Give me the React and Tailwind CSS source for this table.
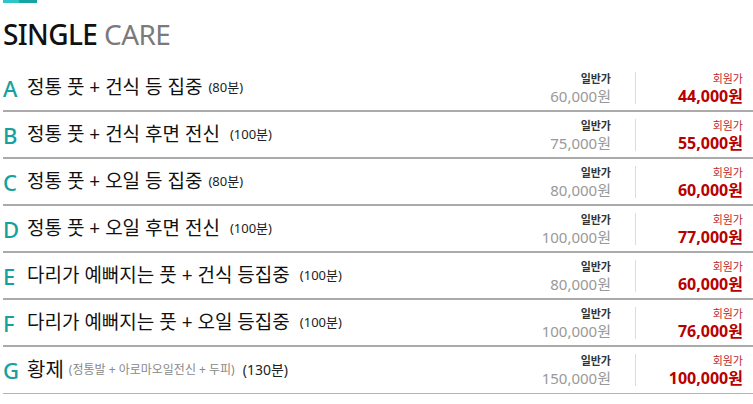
const items = [
  { key: 'A', name: '정통 풋 + 건식 등 집중', time: '(80분)', gap: 'ml-[6px]', normal: '60,000원', member: '44,000원' },
  { key: 'B', name: '정통 풋 + 건식 후면 전신', time: '(100분)', gap: 'ml-[10px]', normal: '75,000원', member: '55,000원' },
  { key: 'C', name: '정통 풋 + 오일 등 집중', time: '(80분)', gap: 'ml-[6px]', normal: '80,000원', member: '60,000원' },
  { key: 'D', name: '정통 풋 + 오일 후면 전신', time: '(100분)', gap: 'ml-[10px]', normal: '100,000원', member: '77,000원' },
  { key: 'E', name: '다리가 예뻐지는 풋 + 건식 등집중', time: '(100분)', gap: 'ml-[10px]', normal: '80,000원', member: '60,000원' },
  { key: 'F', name: '다리가 예뻐지는 풋 + 오일 등집중', time: '(100분)', gap: 'ml-[10px]', normal: '100,000원', member: '76,000원' },
];

function Prices({ normal, member }) {
  return (
    <div className="flex items-center">
      <div className="flex flex-col items-end gap-[3px] pr-[24px]">
        <span className="text-[11px] leading-[13px] font-bold text-[#333]">일반가</span>
        <span className="text-[15px] leading-[16px] text-[#999]">{normal}</span>
      </div>
      <div className="w-px h-[32px] bg-[#dcdcdc]" />
      <div className="w-[117px] flex flex-col items-end gap-[3px] pr-[10px]">
        <span className="text-[11px] leading-[13px] text-[#c0282d]">회원가</span>
        <span className="text-[16px] leading-[16px] font-bold text-[#b80000]">{member}</span>
      </div>
    </div>
  );
}

export default function App() {
  return (
    <div
      className="w-[753px] h-[404px] bg-white pl-[3px] overflow-hidden"
      style={{ fontFamily: '"Noto Sans", "Noto Sans CJK KR", sans-serif' }}
    >
      {/* accent bar */}
      <div className="flex h-[3px] w-[34px]">
        <div className="w-[16px] bg-[#2cc6c9]" />
        <div className="w-[18px] bg-[#17a3a1]" />
      </div>

      {/* title */}
      <div className="h-[62px] flex items-center">
        <h1 className="text-[28px] leading-none tracking-[-0.6px]">
          <span className="font-medium text-[#111]">SINGLE</span>{' '}
          <span className="text-[#7a7a7a]">CARE</span>
        </h1>
      </div>

      {/* menu rows */}
      {items.map((it) => (
        <div key={it.key} className="h-[47px] border-b-2 border-[#aaaaaa] flex items-center justify-between">
          <div className="flex items-center">
            <span className="w-[24px] text-[22px] leading-none font-medium text-[#16a09e]">{it.key}</span>
            <span className="text-[19px] leading-none text-[#111]">{it.name}</span>
            <span className={`${it.gap} text-[13px] leading-none text-[#222]`}>{it.time}</span>
          </div>
          <Prices normal={it.normal} member={it.member} />
        </div>
      ))}

      <div className="h-[47px] border-b border-[#b4b4b4] flex items-center justify-between">
        <div className="flex items-center">
          <span className="w-[24px] text-[22px] leading-none font-medium text-[#16a09e]">G</span>
          <span className="text-[20px] leading-none text-[#111]">황제</span>
          <span className="ml-[5px] text-[12px] leading-none text-[#888]">(정통발 + 아로마오일전신 + 두피)</span>
          <span className="ml-[8px] text-[14px] leading-none text-[#222]">(130분)</span>
        </div>
        <Prices normal="150,000원" member="100,000원" />
      </div>
    </div>
  );
}
